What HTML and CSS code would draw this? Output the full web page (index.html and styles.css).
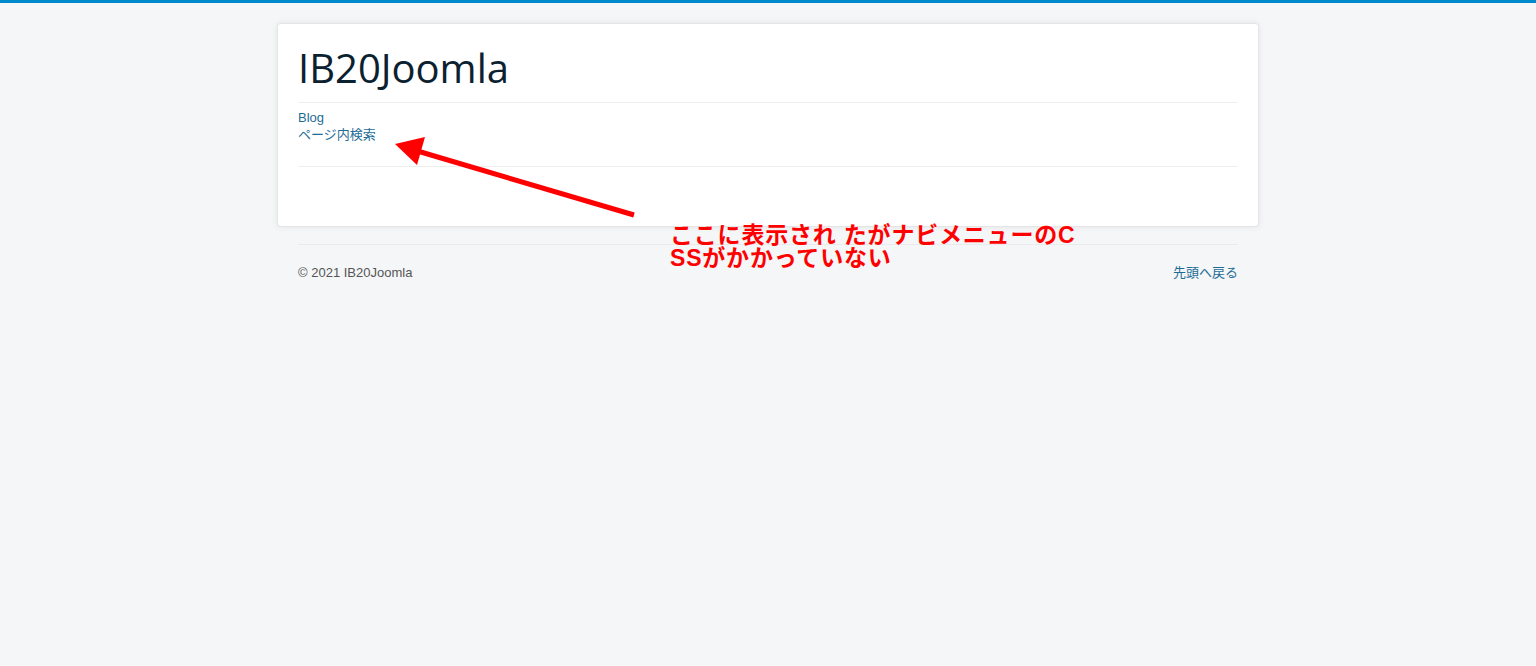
FILE: index.html
```html
<!DOCTYPE html>
<html lang="ja">
<head>
<meta charset="utf-8">
<title>IB20Joomla</title>
<link rel="stylesheet" href="styles.css">
</head>
<body class="site">
  <div class="body">
    <div class="container">
      <header class="header">
        <a class="brand" href="#"><span class="site-title">IB20Joomla</span></a>
      </header>
      <hr class="rule rule-top">
      <nav class="navigation">
        <ul class="nav-list">
          <li><a href="#">Blog</a></li>
          <li><a href="#">ページ内検索</a></li>
        </ul>
      </nav>
      <hr class="rule rule-bottom">
      <main class="main-area"></main>
    </div>
  </div>
  <footer class="footer">
    <div class="footer-inner">
      <hr class="rule footer-rule">
      <div class="footer-row">
        <p class="copyright">© 2021 IB20Joomla</p>
        <p class="back-top"><a href="#">先頭へ戻る</a></p>
      </div>
    </div>
  </footer>

  <div class="annotation">ここに表示され たがナビメニューのC<br>SSがかかっていない</div>
  <svg class="arrow" width="1536" height="666" viewBox="0 0 1536 666" aria-hidden="true">
    <line x1="634" y1="212" x2="414" y2="147" stroke="#ff0000" stroke-width="5"/>
    <polygon points="395,141 425,134 417,162" fill="#ff0000"/>
  </svg>
</body>
</html>
```
FILE: styles.css
```css
html, body {
  margin: 0;
  padding: 0;
}
.site {
  background: #f4f6f7;
  border-top: 3px solid #0088cc;
  padding: 20px 0;
  min-height: 666px;
  box-sizing: border-box;
  font-family: "Liberation Sans", Arial, "Noto Sans CJK JP", sans-serif;
  font-size: 13px;
  line-height: 18px;
  color: #555;
  position: relative;
}
a {
  color: #1e6d96;
  text-decoration: none;
}
.container {
  width: 940px;
  margin: 0 auto;
  background: #fff;
  padding: 20px;
  border: 1px solid rgba(0, 0, 0, 0.1);
  border-radius: 4px;
  box-shadow: 0 0 6px rgba(0, 0, 0, 0.075);
}
.header {
  height: 48px;
}
.brand {
  color: #0b2130;
}
.site-title {
  font-family: "Open Sans", sans-serif;
  font-size: 40px;
  line-height: 48px;
  font-weight: 400;
}
.rule {
  border: 0;
  border-top: 1px solid #eee;
  border-bottom: 1px solid #fff;
  margin: 0;
  height: 0;
}
.rule-top {
  margin-top: 10px;
}
.nav-list {
  list-style: none;
  margin: 5px 0 0;
  padding: 0;
  line-height: 17px;
}
.rule-bottom {
  margin-top: 23px;
}
.main-area {
  height: 38px;
}
.footer-inner {
  width: 940px;
  margin: 0 auto;
}
.footer-rule {
  margin-top: 17px;
  border-top-color: #e8eaeb;
  border-bottom: 0;
}
.footer-row {
  display: flex;
  justify-content: space-between;
  margin-top: 19px;
}
.footer-row p {
  margin: 0;
}
.copyright {
  color: #555;
}
.annotation {
  position: absolute;
  left: 670px;
  top: 221px;
  color: #ff0000;
  font-family: "Liberation Sans", Arial, "Noto Sans CJK JP", sans-serif;
  font-weight: 700;
  font-size: 23px;
  line-height: 23px;
  letter-spacing: 0.8px;
  white-space: nowrap;
}
.arrow {
  position: absolute;
  left: 0;
  top: 0;
  pointer-events: none;
}
```
